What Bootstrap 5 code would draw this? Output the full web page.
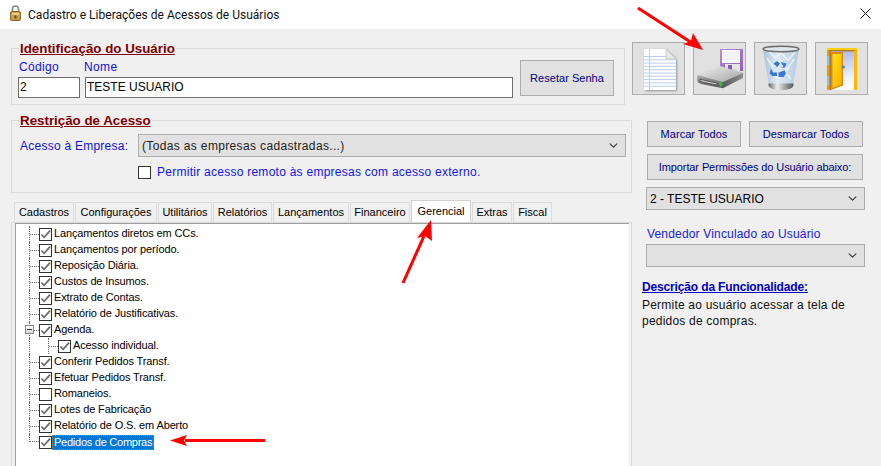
<!DOCTYPE html>
<html lang="pt-BR">
<head>
<meta charset="utf-8">
<title>Cadastro e Liberações de Acessos de Usuários</title>
<link href="https://cdn.jsdelivr.net/npm/bootstrap@5.3.0/dist/css/bootstrap.min.css" rel="stylesheet">
<style>
html,body{height:466px;overflow:hidden}
body{background:#f0f0f0;font-family:"Liberation Sans",Arial,sans-serif;font-size:12px;color:#000;position:relative}
.wintitle{height:29px;background:#fff;padding-left:10px;font-family:Roboto,sans-serif;font-size:12px;color:#111}
.wintitle .ttxt{margin-left:7px;letter-spacing:.02px}
.lockico{margin-top:-3px}
.winclose{margin-left:auto;margin-right:10px;display:block;margin-top:-2px}
.leftcol{width:632px;padding-left:11px}
.rightcol{width:249px}
.grp{border:1px solid #dadada;padding:0 8px 0 6px;margin:0;min-width:0}
.grp legend{float:none;width:auto;margin:0 0 0 1px;padding:2px 1px 0;font-size:13.33px;line-height:14px;font-weight:700;color:#800000;text-decoration:underline}
.grp1{width:614px;height:65px;margin-top:11px}
.grp2{width:621px;height:81px;margin-top:7px}
.grprow1{margin-top:4px}
.lbl{color:#1010e0;font-size:12px;letter-spacing:.35px;line-height:14px}
.lbl-code{width:62px;padding-left:1px}
.lbl-emp{width:120px;flex:none;padding-left:2px;letter-spacing:.25px}
.fld{border:1px solid #6e6e6e;height:21px;padding:0 1px;font-size:12px;background:#fff;color:#000;line-height:19px}
.code-box{width:62px}
.name-box{width:428px}
.fldrow{gap:5px;margin-top:3px}
.wbtn{background:#e1e1e1;border:1px solid #adadad;border-radius:0;color:#000080;font-size:11px;padding:0;line-height:1;white-space:nowrap;letter-spacing:.03px}
.wbtn:hover{background:#e1e1e1;border-color:#adadad;color:#000080}
.reset-btn{width:94px;height:36px;margin-right:2px}
.wsel{border:1px solid #adadad;border-radius:0;background-color:#e1e1e1;font-size:12px;height:23px;padding:0 20px 0 3px;color:#222;letter-spacing:.35px;background-size:11px 9px;background-position:right 6px center;box-shadow:none}
.sel-emp{width:488px;flex:none}
.emprow{margin-top:6px}
.remrow{margin:6px 0 0 120px;gap:6px}
.chk-big.form-check-input{width:13px;height:13px;margin:0;border:1px solid #333;border-radius:0;background-color:#fff;flex:none;box-shadow:none}
.tree-chk.form-check-input{width:13px;height:13px;margin:0;border:1px solid #333;border-radius:0;background-color:#fff;flex:none;box-shadow:none;opacity:1}
.tree-chk.form-check-input:checked{background-color:#fff;border-color:#333;background-size:100% 100%;background-image:url("data:image/svg+xml,%3csvg xmlns='http://www.w3.org/2000/svg' viewBox='0 0 12 12'%3e%3cpath d='M1.500 6l3 3L11 1.800' fill='none' stroke='%23666' stroke-width='1.800'/%3e%3c/svg%3e")}
.remote{color:#1414f0;letter-spacing:.26px}
.ftabs{border:0;padding-left:3px;margin-top:7px;height:22px;align-items:flex-end;flex-wrap:nowrap;gap:1px}
.ftabs .nav-link{border:1px solid #dcdcdc;border-bottom:0;border-radius:0;background:#f0f0f0;color:#000;font-size:11px;height:20px;line-height:19px;padding:0;margin:0;text-align:center;white-space:nowrap}
.ftabs .nav-link.active{background:#fff;height:22px;line-height:21px;border-color:#d0d0d0;color:#000}
.tw1{width:60px}.tw2{width:82px}.tw3{width:54px}.tw4{width:59px}.tw5{width:76px}.tw6{width:60px}.tw7{width:60px}.tw8{width:40px}.tw9{width:39px}
.tabpage{border:1px solid #dadada;border-bottom:0;padding:0 2px 0 3px;height:260px;width:621px}
.treebox{background:#fff;border-top:1px solid #a0a0a0;border-left:1px solid #a0a0a0;height:100%;padding-top:2px}
.tnode{height:16px;display:flex;align-items:center;font-size:11px;letter-spacing:-.13px;line-height:14px;white-space:nowrap}
.elbow{flex:none;width:10px;height:16px;margin-left:13px;border-left:1px dotted #666;position:relative}
.elbow::after{content:"";position:absolute;left:0;right:0;top:8px;border-top:1px dotted #666}
.elbow.endl{height:8px;align-self:flex-start}
.elbow.endl::after{top:7px}
.elbow.inner{margin-left:18px}
.vline{flex:none;width:1px;height:16px;margin-left:13px;border-left:1px dotted #666}
.minusbox{position:absolute;left:-5px;top:3px;width:9px;height:9px;border:1px solid #8a8a8a;background:linear-gradient(#fff,#d8d8d8);z-index:1}
.minusbox::after{content:"";position:absolute;left:1px;right:1px;top:3px;height:1px;background:#333}
.ttext{padding:0 2px;height:16px;line-height:15px}
.ttext.sel{background:#0078d7;color:#fff;height:15px;line-height:14px;outline:1px dotted #d08000;outline-offset:-1px;letter-spacing:-.25px}
.toolrow{gap:8px;margin-top:13px}
.toolbtn{width:53px;height:53px;padding:0;background:#e1e1e1;border:1px solid #adadad;border-radius:0;flex:none}
.toolbtn:hover{background:#e1e1e1;border-color:#adadad}
.toolbtn svg{display:block}
.rinner{padding-left:15px;width:233px}
.markrow{gap:8px;margin-top:26px}
.mark-btn{width:94px;height:26px}
.unmark-btn{width:114px;height:26px}
.import-btn{width:216px;height:26px;margin-top:7px;letter-spacing:-.1px}
.sel-right{width:219px;margin-left:-1px;height:23px;color:#000;font-size:12px;letter-spacing:0}
.sel-user{margin-top:7px}
.vend{color:#1a1ae0;letter-spacing:.17px;line-height:14px;margin-top:17px;margin-bottom:3px}
.desc-h{color:#0000c0;font-weight:700;font-size:12px;letter-spacing:-.15px;text-decoration:underline;margin-left:-5px;line-height:14px;margin-top:13px}
.desc-t{margin:3px 0 0 -5px;line-height:16px;letter-spacing:.21px;width:225px;color:#111}
.overlay{position:absolute;left:0;top:0;pointer-events:none}
</style>
</head>
<body>
<div class="wintitle d-flex align-items-center">
  <svg class="lockico" width="11" height="16" viewBox="0 0 11 16"><path d="M2.500 7V4a3 3 0 0 1 6 0V7" fill="none" stroke="#8a8a7a" stroke-width="1.600"/><rect x=".5" y="6.500" width="10" height="9" rx="1.500" fill="#c4a04c" stroke="#8a6a20"/><rect x="2" y="8" width="7" height="2" fill="#e8cf80"/><rect x="4.500" y="10.500" width="2" height="3" fill="#6a4a10"/></svg>
  <span class="ttxt">Cadastro e Liberações de Acessos de Usuários</span>
  <svg class="winclose" width="11" height="11" viewBox="0 0 11 11"><path d="M.5.5l10 10M10.500.5l-10 10" stroke="#111" stroke-width="1" fill="none"/></svg>
</div>
<div class="d-flex">
  <div class="leftcol">
    <fieldset class="grp grp1">
      <legend>Identificação do Usuário</legend>
      <div class="d-flex grprow1">
        <div class="d-flex flex-column">
          <div class="d-flex">
            <span class="lbl lbl-code">Código</span><span class="lbl ms-1">Nome</span>
          </div>
          <div class="d-flex fldrow">
            <div class="fld code-box">2</div><div class="fld name-box">TESTE USUARIO</div>
          </div>
        </div>
        <button type="button" class="btn wbtn reset-btn ms-auto">Resetar Senha</button>
      </div>
    </fieldset>
    <fieldset class="grp grp2">
      <legend>Restrição de Acesso</legend>
      <div class="d-flex align-items-center emprow">
        <span class="lbl lbl-emp">Acesso à Empresa:</span>
        <select class="form-select wsel sel-emp"><option>(Todas as empresas cadastradas...)</option></select>
      </div>
      <div class="d-flex align-items-center remrow">
        <input type="checkbox" class="form-check-input chk-big">
        <span class="remote">Permitir acesso remoto às empresas com acesso externo.</span>
      </div>
    </fieldset>
    <ul class="nav nav-tabs ftabs">
      <li class="nav-item"><a class="nav-link tw1" href="#">Cadastros</a></li>
      <li class="nav-item"><a class="nav-link tw2" href="#">Configurações</a></li>
      <li class="nav-item"><a class="nav-link tw3" href="#">Utilitários</a></li>
      <li class="nav-item"><a class="nav-link tw4" href="#">Relatórios</a></li>
      <li class="nav-item"><a class="nav-link tw5" href="#">Lançamentos</a></li>
      <li class="nav-item"><a class="nav-link tw6" href="#">Financeiro</a></li>
      <li class="nav-item"><a class="nav-link tw7 active" href="#">Gerencial</a></li>
      <li class="nav-item"><a class="nav-link tw8" href="#">Extras</a></li>
      <li class="nav-item"><a class="nav-link tw9" href="#">Fiscal</a></li>
    </ul>
    <div class="tabpage">
      <div class="treebox">
        <div class="tnode"><span class="elbow"></span><input type="checkbox" class="form-check-input tree-chk" checked><span class="ttext">Lançamentos diretos em CCs.</span></div>
        <div class="tnode"><span class="elbow"></span><input type="checkbox" class="form-check-input tree-chk" checked><span class="ttext">Lançamentos por período.</span></div>
        <div class="tnode"><span class="elbow"></span><input type="checkbox" class="form-check-input tree-chk" checked><span class="ttext">Reposição Diária.</span></div>
        <div class="tnode"><span class="elbow"></span><input type="checkbox" class="form-check-input tree-chk" checked><span class="ttext">Custos de Insumos.</span></div>
        <div class="tnode"><span class="elbow"></span><input type="checkbox" class="form-check-input tree-chk" checked><span class="ttext">Extrato de Contas.</span></div>
        <div class="tnode"><span class="elbow"></span><input type="checkbox" class="form-check-input tree-chk" checked><span class="ttext">Relatório de Justificativas.</span></div>
        <div class="tnode"><span class="elbow"><span class="minusbox"></span></span><input type="checkbox" class="form-check-input tree-chk" checked><span class="ttext">Agenda.</span></div>
        <div class="tnode"><span class="vline"></span><span class="elbow inner"></span><input type="checkbox" class="form-check-input tree-chk" checked><span class="ttext">Acesso individual.</span></div>
        <div class="tnode"><span class="elbow"></span><input type="checkbox" class="form-check-input tree-chk" checked><span class="ttext">Conferir Pedidos Transf.</span></div>
        <div class="tnode"><span class="elbow"></span><input type="checkbox" class="form-check-input tree-chk" checked><span class="ttext">Efetuar Pedidos Transf.</span></div>
        <div class="tnode"><span class="elbow"></span><input type="checkbox" class="form-check-input tree-chk"><span class="ttext">Romaneios.</span></div>
        <div class="tnode"><span class="elbow"></span><input type="checkbox" class="form-check-input tree-chk" checked><span class="ttext">Lotes de Fabricação</span></div>
        <div class="tnode"><span class="elbow"></span><input type="checkbox" class="form-check-input tree-chk" checked><span class="ttext">Relatório de O.S. em Aberto</span></div>
        <div class="tnode"><span class="elbow endl"></span><input type="checkbox" class="form-check-input tree-chk" checked><span class="ttext sel">Pedidos de Compras</span></div>
      </div>
    </div>
  </div>
  <div class="rightcol">
    <div class="d-flex toolrow">
      <button type="button" class="btn toolbtn" aria-label="Novo">
        <svg width="51" height="51" viewBox="1 1 51 51">
          <defs><filter id="sh" x="-20%" y="-20%" width="140%" height="140%"><feDropShadow dx="1" dy="1" stdDeviation=".8" flood-color="#000" flood-opacity=".35"/></filter></defs>
          <path d="M12 7h22l10 10v31H12z" fill="#fdfdfd" filter="url(#sh)"/>
          <path d="M34 7v10h10z" fill="#e6e6e6" stroke="#b8b8b8" stroke-width=".6"/>
          <path d="M12 14.500h22M12 17.800h32M12 21.100h32M12 24.400h32M12 27.700h32M12 31h32M12 34.300h32M12 37.600h32M12 40.900h32M12 44.200h32" stroke="#bcd0ea" stroke-width="1"/>
          <path d="M17.500 7v41" stroke="#e6c4bc" stroke-width="1"/>
        </svg>
      </button>
      <button type="button" class="btn toolbtn" aria-label="Salvar">
        <svg width="51" height="51" viewBox="1 1 51 51">
          <defs>
            <linearGradient id="dtop" x1="0" y1="0" x2="1" y2="1"><stop offset="0" stop-color="#f0f0f0"/><stop offset="1" stop-color="#a4a4a4"/></linearGradient>
            <linearGradient id="dfr" x1="0" y1="0" x2="0" y2="1"><stop offset="0" stop-color="#b0b0b0"/><stop offset="1" stop-color="#4e4e4e"/></linearGradient>
            <linearGradient id="dri" x1="0" y1="0" x2="1" y2="0"><stop offset="0" stop-color="#5a5a5a"/><stop offset="1" stop-color="#8e8e8e"/></linearGradient>
            <linearGradient id="flop" x1="0" y1="0" x2="1" y2="1"><stop offset="0" stop-color="#b88cd8"/><stop offset="1" stop-color="#9060b4"/></linearGradient>
          </defs>
          <path d="M27 7h23v22H27z" fill="url(#flop)"/>
          <rect x="29" y="8" width="18" height="13" fill="#f8f8f8"/>
          <path d="M29.500 11h17M29.500 14h17M29.500 17h17" stroke="#e2dcea" stroke-width=".6"/>
          <rect x="32" y="22" width="15" height="7" fill="#e4e4e4"/><rect x="35" y="23" width="4" height="6" fill="#8a58ae"/>
          <path d="M4.300 33 27 24l23 7-20 9z" fill="url(#dtop)" filter="url(#sh)"/>
          <path d="M4.300 33 30 40v6.300L8 42c-2.500-.7-3.700-2-3.700-3.500z" fill="url(#dfr)"/>
          <path d="M30 40l20-9v5L30 46.300z" fill="url(#dri)"/>
          <path d="M7 37.200c5 1.300 11 2.800 17 3.800v2c-6-1-12-2.400-17-3.800z" fill="#d4d4d4" stroke="#3a3a3a" stroke-width=".7"/>
          <rect x="26.500" y="39.500" width="2" height="5" fill="#35c63a"/>
        </svg>
      </button>
      <button type="button" class="btn toolbtn" aria-label="Excluir">
        <svg width="51" height="51" viewBox="1 1 51 51">
          <defs>
            <linearGradient id="bin" x1="0" y1="0" x2="1" y2="0"><stop offset="0" stop-color="#a8c2d8"/><stop offset=".4" stop-color="#dfeaf4"/><stop offset="1" stop-color="#b4cade"/></linearGradient>
            <linearGradient id="met" x1="0" y1="0" x2="1" y2="0"><stop offset="0" stop-color="#666"/><stop offset=".35" stop-color="#eee"/><stop offset=".7" stop-color="#999"/><stop offset="1" stop-color="#555"/></linearGradient>
          </defs>
          <path d="M9 7 15 44h24l6-37z" fill="url(#bin)"/>
          <path d="M14 8l7 8 6-5 7 7 8-9M13 16l6 9 9-6 5 9 7-11M16 30l8 6 7-5 6 6" fill="none" stroke="#f4f8fc" stroke-width="1.500" opacity=".8"/>
          <path d="M14.500 43c0 3 5 5 12.500 5s12.500-2 12.500-5v-1.500h-25z" fill="url(#met)"/>
          <ellipse cx="27" cy="7" rx="18" ry="2.800" fill="#dfe6ec" stroke="#6c6c6c" stroke-width="1.400"/>
          <path d="M19.500 21.500l3.500-2.500 3 2.500-2.800 3.800zM26.500 20l3 4.500-2.500 1.200 4-.2 1.500-4zM17 26.500l-1.500 5 3 2.500h4.500v-3.500h-4zM24.500 30.500v4.500h5l2.500-3.500-1.500-3z" fill="#3a78d0"/>
        </svg>
      </button>
      <button type="button" class="btn toolbtn" aria-label="Sair">
        <svg width="51" height="51" viewBox="1 1 51 51">
          <defs>
            <linearGradient id="sky" x1="0" y1="0" x2="0" y2="1"><stop offset="0" stop-color="#b2bcec"/><stop offset=".7" stop-color="#f0f4fc"/><stop offset="1" stop-color="#fff"/></linearGradient>
            <linearGradient id="dr" x1="0" y1="0" x2="1" y2="1"><stop offset="0" stop-color="#ffe414"/><stop offset="1" stop-color="#ffae00"/></linearGradient>
          </defs>
          <rect x="12" y="6" width="30" height="42" fill="#e8a000"/>
          <rect x="12" y="6" width="30" height="2" fill="#ffd000"/>
          <rect x="14.500" y="8" width="24.500" height="40" fill="#b07830"/>
          <rect x="16" y="9.500" width="23" height="38.500" fill="url(#sky)"/>
          <path d="M39 9h3v39h-3z" fill="#ffb800"/>
          <path d="M16 10h12v33.500L16 48z" fill="#d98a10"/>
          <path d="M17.500 12h9v30.500l-9 3.500z" fill="url(#dr)"/>
          <circle cx="28.500" cy="25" r="1.600" fill="#5a8ab0"/>
          <path d="M12.500 14h1.500v9h-1.500zM12.500 34h1.500v9h-1.500z" fill="#9cc4e0"/>
        </svg>
      </button>
    </div>
    <div class="rinner">
      <div class="d-flex markrow">
        <button type="button" class="btn wbtn mark-btn">Marcar Todos</button>
        <button type="button" class="btn wbtn unmark-btn">Desmarcar Todos</button>
      </div>
      <button type="button" class="btn wbtn import-btn d-block">Importar Permissões do Usuário abaixo:</button>
      <select class="form-select wsel sel-right sel-user"><option>2 - TESTE USUARIO</option></select>
      <div class="vend">Vendedor Vinculado ao Usuário</div>
      <select class="form-select wsel sel-right"><option></option></select>
      <div class="desc-h">Descrição da Funcionalidade:</div>
      <p class="desc-t">Permite ao usuário acessar a tela de pedidos de compras.</p>
    </div>
  </div>
</div>
<svg class="overlay" width="881" height="466" viewBox="0 0 881 466" aria-hidden="true">
  <path d="M638 8 692 43" stroke="#f00" stroke-width="3" fill="none"/>
  <path d="M703 50 683 44 691 41 693 33z" fill="#f00"/>
  <path d="M403 283 424 236" stroke="#f00" stroke-width="3" fill="none"/>
  <path d="M431 220 432 241 425 236 417 238z" fill="#f00"/>
  <path d="M265 440.500H185" stroke="#f00" stroke-width="3" fill="none"/>
  <path d="M170 440.500 187 435 184 440.500 187 446z" fill="#f00"/>
</svg>
</body>
</html>
